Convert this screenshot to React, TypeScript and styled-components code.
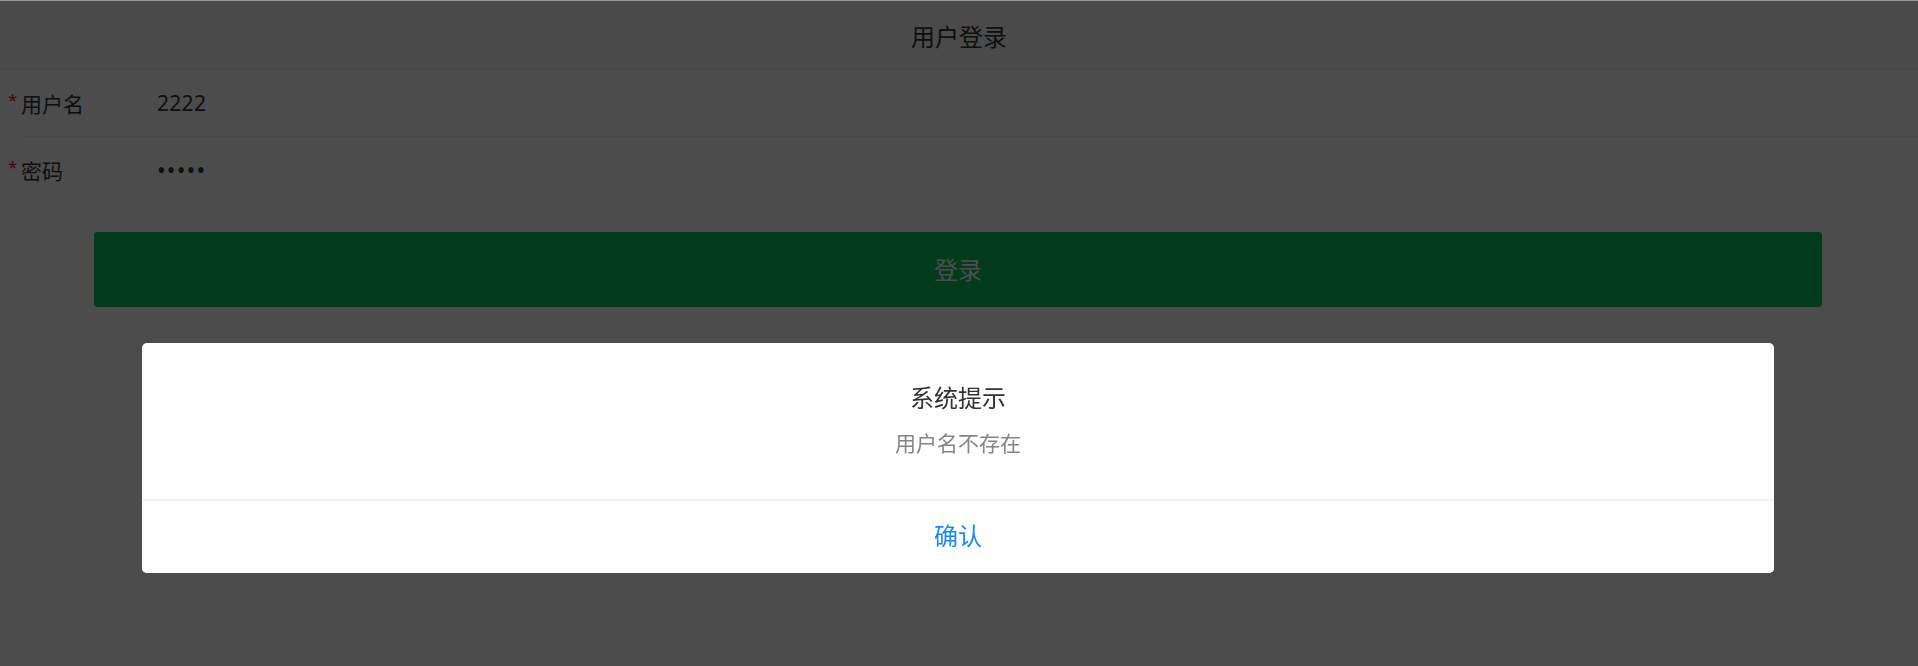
import React from "react";
import styled, { createGlobalStyle } from "styled-components";

const GlobalStyle = createGlobalStyle`
  html, body {
    margin: 0;
    padding: 0;
    background: #ffffff;
    font-family: "Noto Sans", "Noto Sans CJK SC", sans-serif;
    overflow: hidden;
  }
  body {
    border-top: 1px solid #9a9a9a;
  }
`;

const Page = styled.div`
  display: flex;
  flex-direction: column;
  background: #ffffff;
`;

const NavBar = styled.header`
  height: 68px;
  display: flex;
  align-items: center;
  justify-content: center;
  background: #f9f9f9;
  border-bottom: 1px solid #ebedf0;
`;

const NavTitle = styled.h1`
  margin: 0;
  font-size: 24px;
  font-weight: 400;
  color: #323233;
  line-height: 36px;
  padding-top: 3px;
`;

const FieldGroup = styled.div`
  display: flex;
  flex-direction: column;
  background: #ffffff;
`;

const FieldRow = styled.div`
  height: 66px;
  display: flex;
  align-items: center;
  padding-left: 8px;
  font-size: 21px;
  color: #323233;
`;

const Divider = styled.div`
  height: 1px;
  margin-left: 22px;
  background: #ebedf0;
`;

const Label = styled.label`
  width: 149px;
  flex: none;
  display: flex;
  align-items: center;
`;

const Star = styled.span`
  color: #ee0a24;
  width: 13px;
  font-size: 17px;
  line-height: 1;
  position: relative;
  top: -4px;
`;

const Value = styled.span<{ $dots?: boolean }>`
  font-size: ${(p) => (p.$dots ? "23px" : "21px")};
  letter-spacing: ${(p) => (p.$dots ? "1.2px" : "0.3px")};
`;

const ButtonWrap = styled.div`
  padding: 29px 96px 0 94px;
`;

const PrimaryButton = styled.button`
  width: 100%;
  height: 75px;
  border: 1px solid #07c160;
  border-radius: 3px;
  background: #07c160;
  color: #ffffff;
  font-family: "Noto Sans CJK SC", sans-serif;
  font-size: 24px;
  padding-bottom: 3px;
  cursor: pointer;
`;

const Overlay = styled.div`
  position: fixed;
  top: 1px;
  left: 0;
  right: 0;
  bottom: 0;
  background: rgba(0, 0, 0, 0.7);
`;

const Dialog = styled.div`
  position: fixed;
  top: 343px;
  left: 142px;
  width: 1632px;
  background: #ffffff;
  border-radius: 5px;
  overflow: hidden;
  display: flex;
  flex-direction: column;
  text-align: center;
`;

const DialogBody = styled.div`
  padding: 37px 24px 41px;
  display: flex;
  flex-direction: column;
`;

const DialogTitle = styled.div`
  font-size: 24px;
  line-height: 36px;
  color: #323233;
`;

const DialogMessage = styled.div`
  padding-top: 12px;
  font-size: 21px;
  line-height: 30px;
  color: #858585;
`;

const DialogFooter = styled.div`
  border-top: 2px solid #f2f3f5;
  display: flex;
`;

const DialogButton = styled.button`
  flex: 1;
  height: 72px;
  border: 0;
  background: #ffffff;
  color: #1989fa;
  font-family: "Noto Sans CJK SC", sans-serif;
  font-size: 24px;
  padding: 0 0 5px;
  cursor: pointer;
`;

export default function App() {
  return (
    <>
      <GlobalStyle />
      <Page>
        <NavBar>
          <NavTitle>用户登录</NavTitle>
        </NavBar>
        <FieldGroup>
          <FieldRow>
            <Label>
              <Star>*</Star>用户名
            </Label>
            <Value>2222</Value>
          </FieldRow>
          <Divider />
          <FieldRow>
            <Label>
              <Star>*</Star>密码
            </Label>
            <Value $dots>•••••</Value>
          </FieldRow>
        </FieldGroup>
        <ButtonWrap>
          <PrimaryButton>登录</PrimaryButton>
        </ButtonWrap>
      </Page>
      <Overlay />
      <Dialog>
        <DialogBody>
          <DialogTitle>系统提示</DialogTitle>
          <DialogMessage>用户名不存在</DialogMessage>
        </DialogBody>
        <DialogFooter>
          <DialogButton>确认</DialogButton>
        </DialogFooter>
      </Dialog>
    </>
  );
}
